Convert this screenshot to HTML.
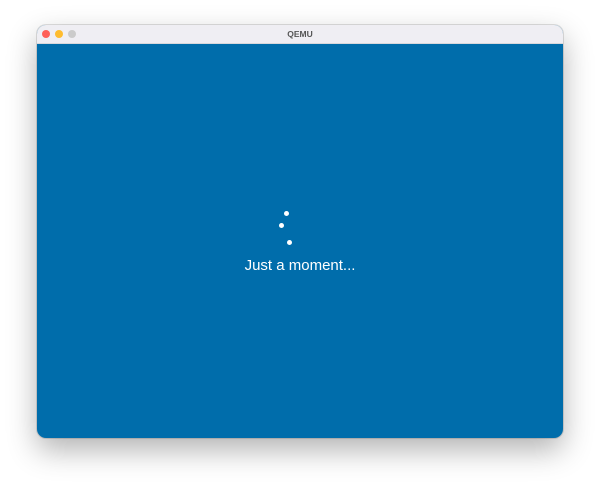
<!DOCTYPE html>
<html><head><style>
body{margin:0;width:600px;height:487px;background:#fff;position:relative;overflow:hidden;font-family:"Liberation Sans",sans-serif}
.win{position:absolute;left:37px;top:25px;width:526px;height:413px;border-radius:9px;overflow:hidden;box-shadow:0 12px 30px rgba(0,0,0,.3),0 0 0 1px rgba(0,0,0,.12);background:#006dab}
.tb{position:absolute;left:0;top:0;width:100%;height:18px;background:#efeef3;border-bottom:1px solid #d8d8dc}
.tb .t{position:absolute;left:0;right:0;top:4px;text-align:center;font-size:8.5px;font-weight:bold;color:#555}
.d{position:absolute;top:5px;width:8px;height:8px;border-radius:50%}
.dot{position:absolute;width:5px;height:5px;border-radius:50%;background:#fff}
.msg{position:absolute;left:0;right:0;top:232px;text-align:center;color:#fff;font-size:15px;font-family:"Liberation Sans",sans-serif}
</style></head><body>
<div class="win">
<div class="tb"><div class="d" style="left:5px;background:#fe5f57"></div><div class="d" style="left:18px;background:#febc2e"></div><div class="d" style="left:31px;background:#cbcbcb"></div><div class="t">QEMU</div></div>
<div class="dot" style="left:247px;top:186px"></div>
<div class="dot" style="left:242px;top:198px"></div>
<div class="dot" style="left:250px;top:215px"></div>
<div class="msg">Just a moment...</div>
</div>
</body></html>
